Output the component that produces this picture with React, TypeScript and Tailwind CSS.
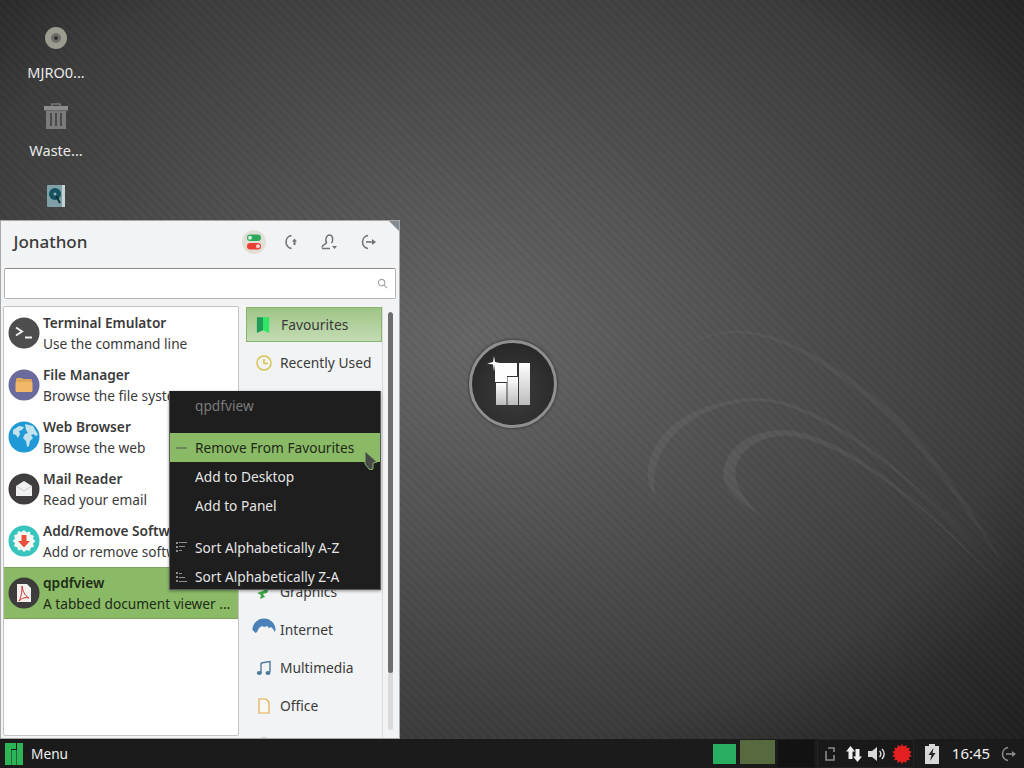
import React from "react";

const Terminal = () => (
  <svg viewBox="0 0 32 32" className="w-8 h-8"><circle cx="16" cy="16" r="15.5" fill="#4d4d4d" /><path d="M8 10.500l6 4-6 4" fill="none" stroke="#f0f0f0" strokeWidth="2" /><path d="M17 20.500h7" stroke="#f0f0f0" strokeWidth="2" /></svg>
);
const Files = () => (
  <svg viewBox="0 0 32 32" className="w-8 h-8"><circle cx="16" cy="16" r="15.5" fill="#6b6a9c" /><path d="M8 10l1-1h5l1 1h8l1 1v3H8z" fill="#e0a95a" /><path d="M7.500 13h17v9l-1 1h-15l-1-1z" fill="#f2b867" /></svg>
);
const Globe = () => (
  <svg viewBox="0 0 32 32" className="w-8 h-8"><circle cx="16" cy="16" r="15.500" fill="#1f9ad6" /><path d="M5 9l6-4 5 1-2 3-3 1 1 3-2 4-2-3-3-1zM17 3l8 2 5 9-3 1-1-2-3 1 2 3-3 3-1 5-2 1-1-6-3-3 2-4 3-1-2-3z" fill="#d7eaf2" opacity="0.9" /></svg>
);
const Mail = () => (
  <svg viewBox="0 0 32 32" className="w-8 h-8"><circle cx="16" cy="16" r="15.5" fill="#3f3d3d" /><path d="M8 13l8-5 8 5v10H8z" fill="#f1f1f1" /><path d="M8 13l8 5 8-5" fill="none" stroke="#c9c9c9" strokeWidth="1" /></svg>
);
const Software = () => (
  <svg viewBox="0 0 32 32" className="w-8 h-8"><circle cx="16" cy="16" r="15.5" fill="#37c5bd" /><path d="M16 5l2.500 2.500 3.300-1 .9 3.300 3.300.9-1 3.300L27.500 16 25 18.500l1 3.300-3.300.9-.9 3.300-3.300-1L16 27l-2.500-2.500-3.300 1-.9-3.300-3.300-.9 1-3.300L4.500 16 7 13.500l-1-3.300 3.300-.9.9-3.300 3.300 1z" fill="#f4f8f4" /><path d="M13.500 10h5v6h3.500L16 22.500 10 16h3.500z" fill="#e8503a" /></svg>
);
const Pdf = () => (
  <svg viewBox="0 0 32 32" className="w-8 h-8"><circle cx="16" cy="16" r="15.500" fill="#3d3b3b" /><path d="M9 7h10l4 4v14H9z" fill="#f3f0ee" /><path d="M14 9c1 5 2 9 7 12-4-1-7 0-10 3 2-4 3-8 3-15z" fill="none" stroke="#c9302c" strokeWidth="1" /></svg>
);

const apps = [
  { name: "Terminal Emulator", desc: "Use the command line", icon: <Terminal /> },
  { name: "File Manager", desc: "Browse the file system", icon: <Files /> },
  { name: "Web Browser", desc: "Browse the web", icon: <Globe /> },
  { name: "Mail Reader", desc: "Read your email", icon: <Mail /> },
  { name: "Add/Remove Software", desc: "Add or remove software", icon: <Software /> },
  { name: "qpdfview", desc: "A tabbed document viewer ...", icon: <Pdf />, active: true },
];

const Bookmark = () => (<svg viewBox="0 0 16 18" className="w-[14px] h-[18px]"><path d="M1 0h7v15l-7 3z" fill="#1f9c58" /><path d="M8 0h7v18l-7-3z" fill="#2ee664" /></svg>);
const Clock = () => (<svg viewBox="0 0 16 16" className="w-4 h-4" fill="none" stroke="#d7c24f" strokeWidth="1.500"><circle cx="8" cy="8" r="7" /><path d="M8 4v4.500h4" /></svg>);
const Dots = () => (<svg viewBox="0 0 16 16" className="w-4 h-4"><circle cx="8" cy="8" r="7.500" fill="#dcdcd0" /></svg>);
const Leaf = () => (<svg viewBox="0 0 16 16" className="w-4 h-4"><path d="M1 9l6-2 7-5-3 7-4 1 2 3-5 2 1-4z" fill="#3ca845" /></svg>);
const Cloud = () => (<svg viewBox="0 0 24 24" className="w-6 h-6"><circle cx="12" cy="12" r="11.500" fill="#f4f4f4" /><path d="M.500 12A11.500 11.500 0 0 1 23.500 12l-.7 2-1.800-3-2-2-2 1-2-2-3 1-2-1-3 2-2 4-1.500 1z" fill="#4a81b8" /></svg>);
const Music = () => (<svg viewBox="0 0 16 16" className="w-4 h-4"><path d="M5 3l9-1.500V12" fill="none" stroke="#4c7a97" strokeWidth="1.400" /><path d="M5 3v10" stroke="#4c7a97" strokeWidth="1.400" /><ellipse cx="3.300" cy="13" rx="2.500" ry="2" fill="#4c7a97" /><ellipse cx="12" cy="13" rx="2.500" ry="2" fill="#4c7a97" /></svg>);
const Doc = () => (<svg viewBox="0 0 16 16" className="w-4 h-4"><path d="M3 1h7l3 3v11H3z" fill="#f7f7f4" stroke="#e3aa4b" strokeWidth="1.200" /></svg>);

const cats = [
  { label: "Favourites", icon: <Bookmark />, cls: "h-[35px] mb-[2px] pt-[1px] bg-[linear-gradient(#9ec585,#c4dbb4)] border border-[#8ab46a]", iconCls: "pr-[2px]" },
  { label: "Recently Used", icon: <Clock />, cls: "h-[38px]" },
  { label: "All", icon: <Dots />, cls: "h-[38px]" },
  { label: "Accessories", icon: <Dots />, cls: "h-[38px]" },
  { label: "Development", icon: <Dots />, cls: "h-[38px]" },
  { label: "Education", icon: <Dots />, cls: "h-[38px]" },
  { label: "Games", icon: <Dots />, cls: "h-[39px]" },
  { label: "Graphics", icon: <Leaf />, cls: "h-[38px]" },
  { label: "Internet", icon: <Cloud />, cls: "h-[38px]" },
  { label: "Multimedia", icon: <Music />, cls: "h-[38px]" },
  { label: "Office", icon: <Doc />, cls: "h-[38px]" },
  { label: "Settings", icon: <Dots />, cls: "h-[38px]" },
];

const Toggle = () => (
  <svg viewBox="0 0 24 24" className="w-6 h-6"><circle cx="12" cy="12" r="12" fill="#e2e0d6" /><rect x="5" y="4.500" width="14" height="6.500" rx="3.200" fill="#2fa85a" /><circle cx="8" cy="7.700" r="2" fill="#cfeedd" /><rect x="5" y="13" width="14" height="6.500" rx="3.200" fill="#ea4034" /><circle cx="16" cy="16.200" r="2" fill="#f6d4d0" /></svg>
);
const Suspend = () => (
  <svg viewBox="0 0 16 16" className="w-4 h-4"><path d="M8.500 1.500A6.600 6.600 0 0 0 8.500 14.500" fill="none" stroke="#737373" strokeWidth="1.600" /><path d="M11.500 4.500l2.500 3h-1.500v3.500H10.500V7.500H9z" fill="#737373" /></svg>
);
const UserIcon = () => (
  <svg viewBox="0 0 16 16" className="w-4 h-4" fill="none" stroke="#737373" strokeWidth="1.500"><path d="M1 13.500c0-3 4-3 4.500-5C4 6.500 5 1 8.500 1S12.500 6.500 10.500 9" /><path d="M1 14.500h8" /><path d="M11 12h5l-2.500 3z" fill="#737373" stroke="none" /></svg>
);
const Logout = ({ c = "#737373" }: { c?: string }) => (
  <svg viewBox="0 0 16 16" className="w-4 h-4"><path d="M8 1.500A6.600 6.600 0 0 0 8 14.500" fill="none" stroke={c} strokeWidth="1.600" /><path d="M6 8h7" stroke={c} strokeWidth="1.600" /><path d="M12 5l4 3-4 3z" fill={c} /></svg>
);

const SortIcon = ({ flip }: { flip?: boolean }) => (
  <svg viewBox="0 0 11 11" className={flip ? "w-[11px] h-[11px] -scale-y-100" : "w-[11px] h-[11px]"} fill="#8f8f8f"><rect x="0" y="0" width="2" height="2" /><rect x="3" y="0" width="8" height="1" /><rect x="0" y="4" width="2" height="2" /><rect x="3" y="4" width="6" height="1" /><rect x="0" y="8" width="2" height="2" /><rect x="3" y="8" width="3" height="1" /></svg>
);

const burst = Array.from({ length: 28 }, (_, i) => {
  const r = i % 2 ? 7.6 : 10;
  const a = (i * Math.PI) / 14;
  return `${(10 + r * Math.sin(a)).toFixed(2)},${(10 - r * Math.cos(a)).toFixed(2)}`;
}).join(" ");

const Wallpaper = () => (
  <svg viewBox="0 0 1024 768" className="absolute inset-0 w-full h-full" fill="none">
    <g fill="#ffffff">
      <path opacity="0.06" d="M771 537C745 520 728 505 732 487C738 460 765 447 795 447C850 450 930 510 1024 612C940 525 860 460 800 453C770 451 745 470 744 490C744 505 755 522 771 537Z" />
      <path opacity="0.05" d="M662 516C652 505 650 490 658 470C672 435 720 413 770 414C830 416 920 480 1024 600C930 495 830 420 770 417C725 416 680 440 665 475C659 490 658 505 662 516Z" />
      <path opacity="0.04" d="M685 363C710 348 730 344 750 344C800 346 860 385 910 430C960 480 1000 545 1024 590C990 540 950 480 905 435C855 390 800 350 750 346C730 345 710 350 685 363Z" />
    </g>
    <g stroke="#ffffff" strokeOpacity="0.05">
      <path d="M0 165L60 222" />
      <path d="M0 180L45 222" />
      <path d="M0 200L25 222" />
    </g>
  </svg>
);

const ManjaroBig = () => (
  <div className="absolute left-[469px] top-[340px] w-[88px] h-[88px] rounded-full border-[3px] border-[#8f8f8f] bg-[radial-gradient(circle_at_50%_60%,#3d3d3d,#222222)] shadow-[0_0_3px_#222]">
    <svg viewBox="472 343 82 82" className="w-[82px] h-[82px]">
      <defs><linearGradient id="bar" x1="0" y1="0" x2="0" y2="1"><stop offset="0" stopColor="#ffffff" /><stop offset="1" stopColor="#bcbcbc" /></linearGradient></defs>
      <path d="M495 363H517V376H507V382H495Z" fill="#fdfdfd" />
      <rect x="496" y="383" width="10.500" height="22" fill="url(#bar)" />
      <rect x="507.500" y="377" width="10.500" height="28" fill="url(#bar)" />
      <rect x="519" y="363" width="11" height="42" fill="url(#bar)" />
      <path d="M494 356l1 6 7 1.500-7 1-1 7-1-7-6-1 6-1.500z" fill="#ffffff" />
    </svg>
  </div>
);

function DesktopIcon({ label, icon, cls }: { label?: string; icon: React.ReactNode; cls: string }) {
  return (
    <div className={"w-[112px] flex flex-col items-center " + cls}>
      <div className="h-8 flex items-center justify-center">{icon}</div>
      {label && <div className="mt-[8px] text-[14.500px] leading-5 text-[#e8e8e8]">{label}</div>}
    </div>
  );
}

function MenuItem({ label, icon, active }: { label: string; icon?: React.ReactNode; active?: boolean }) {
  return (
    <div className={"h-[29px] flex items-center " + (active ? "bg-[#8aba66] text-[#1f2a17]" : "text-[#e4e4e4]")}>
      <div className="w-[25px] pl-[6px] flex items-center">{icon}</div>
      <span className="pt-[2px]">{label}</span>
    </div>
  );
}

export default function App() {
  return (
    <div className="w-[1024px] h-[768px] flex flex-col overflow-hidden font-['Noto_Sans','Open_Sans',sans-serif] bg-[#222]">
      <div className="relative flex-1 bg-[radial-gradient(ellipse_720px_520px_at_470px_340px,#666666_0%,#565656_30%,#3c3c3c_77%,#2a2a2a_93%,#202020_108%)]">
        <div className="absolute inset-0 bg-[repeating-linear-gradient(45deg,rgba(0,0,0,0.035)_0px,rgba(0,0,0,0.035)_3px,rgba(255,255,255,0.012)_3px,rgba(255,255,255,0.012)_6.400px)]" />
        <Wallpaper />
        <ManjaroBig />

        <div className="relative flex flex-col pt-[22px]">
          <DesktopIcon cls="h-[78px]" label="MJRO0..." icon={
            <svg viewBox="0 0 24 24" className="w-[24px] h-[24px]"><circle cx="12" cy="12" r="11" fill="#9c9b8f" /><circle cx="12" cy="12" r="5" fill="#6f6e68" /><circle cx="12" cy="12" r="2" fill="#333" /></svg>
          } />
          <DesktopIcon cls="h-[80px]" label="Waste..." icon={
            <svg viewBox="0 0 24 26" className="w-6 h-[26px]"><path d="M8 3V1h8v2" fill="none" stroke="#7b7b7b" strokeWidth="1.500" /><rect x="0" y="3" width="24" height="4.500" fill="#8c8c8c" /><path d="M2 8h20v18H2z" fill="#7b7b7b" /><path d="M7 10v13M12 10v13M17 10v13" stroke="#4a4a4a" strokeWidth="2" /></svg>
          } />
          <DesktopIcon cls="h-8" icon={
            <svg viewBox="0 0 18 22" className="w-[18px] h-[22px]"><rect width="18" height="22" rx="1" fill="#7fa0a6" /><rect x="15" width="3" height="22" fill="#c4d2d2" /><circle cx="8" cy="9" r="6" fill="#14525f" /><circle cx="8" cy="9" r="1.500" fill="#8fb0b5" /><path d="M9 11l4 7" stroke="#14313a" strokeWidth="2" /></svg>
          } />
        </div>

        <div className="absolute left-0 top-[220px] w-[400px] h-[519px] bg-[#f2f3f5] border border-[#a8a8a8] flex flex-col text-[#3a3a3a] overflow-hidden">
          <div className="absolute right-0 top-0 border-t-[10px] border-l-[10px] border-t-[#808a90] border-l-transparent" />
          <div className="h-[46px] flex items-center pl-[12.500px] pr-[23px] pb-[4px] shrink-0">
            <span className="flex-1 text-[17px] font-medium">Jonathon</span>
            <div className="flex items-center">
              <Toggle />
              <div className="ml-[17px]"><Suspend /></div>
              <div className="ml-[22px]"><UserIcon /></div>
              <div className="ml-[23px]"><Logout /></div>
            </div>
          </div>
          <div className="mx-[3px] h-[31px] mt-[1px] bg-white border border-[#b5b5b5] border-t-[#8c8c8c] rounded-[2px] flex items-center justify-end pr-[7px] shrink-0">
            <svg viewBox="0 0 12 12" className="w-[11px] h-[11px]" fill="none" stroke="#a8a8a8" strokeWidth="1.300"><circle cx="5" cy="5" r="3.500" /><path d="M7.500 7.500L11 11" /></svg>
          </div>
          <div className="flex flex-1 min-h-0 mt-[7px]">
            <div className="ml-[2px] w-[236px] h-[430px] bg-white border border-[#c4c4c4] rounded-[2px] shrink-0 overflow-hidden">
              {apps.map((a) => (
                <div key={a.name} className={"h-[52px] flex items-center pl-[4px] " + (a.active ? "bg-[#8aba66] border-y border-[#7ea35f] text-[#1f2a17]" : "")}>
                  <div className="w-8 h-8 shrink-0">{a.icon}</div>
                  <div className="ml-[3px] min-w-0 text-[13.700px] leading-[21px] whitespace-nowrap">
                    <div className="font-semibold">{a.name}</div>
                    <div>{a.desc}</div>
                  </div>
                </div>
              ))}
            </div>
            <div className="ml-[7px] w-[137px] h-[432px] pt-[1px] overflow-hidden shrink-0 border-r border-[#dcdcdc]">
              {cats.map((c) => (
                <div key={c.label} className={"flex items-center text-[13.800px] whitespace-nowrap " + c.cls}>
                  <div className={"w-[34px] flex justify-center " + (c.iconCls ?? "pl-[1px]")}>{c.icon}</div>
                  <span>{c.label}</span>
                </div>
              ))}
            </div>
            <div className="ml-[5px] w-[5px] h-[418px] mt-[6px] rounded-full bg-[#dadada] overflow-hidden shrink-0">
              <div className="h-[361px] bg-[#6e6e6e] rounded-full" />
            </div>
          </div>
        </div>

        <div className="absolute left-[169px] top-[391px] w-[212px] h-[199px] overflow-hidden bg-[#1e1e1e] border-l border-b border-r border-[#5a5a5a] text-[13.700px] shadow-[0_1px_3px_rgba(0,0,0,0.4)]">
          <div className="h-[42px] pt-[5px] pl-[25px] leading-5 text-[#7a7a7a]">qpdfview</div>
          <MenuItem active label="Remove From Favourites" icon={<span className="block w-[11px] h-[2px] bg-[#6e8a58]" />} />
          <MenuItem label="Add to Desktop" />
          <MenuItem label="Add to Panel" />
          <div className="h-[13px]" />
          <MenuItem label="Sort Alphabetically A-Z" icon={<SortIcon />} />
          <MenuItem label="Sort Alphabetically Z-A" icon={<SortIcon flip />} />
        </div>

        <svg viewBox="0 0 14 20" className="absolute left-[364px] top-[450px] w-[14px] h-[20px]"><path d="M1 1l12 11-4 1v6l-3 1-5-6z" fill="#4a4a4a" stroke="#8aba66" strokeWidth="1" /></svg>
      </div>

      <div className="h-[29px] shrink-0 bg-[#1b1b1b] flex items-stretch text-[#efefef] text-[13.700px]">
        <div className="flex items-center pl-[5px] w-[90px]">
          <svg viewBox="0 0 18 22" className="w-[18px] h-[22px]"><path d="M0 0h11v6H6v16H0z" fill="#2db457" /><rect x="6.500" y="7" width="5" height="15" fill="#2db457" /><rect x="12" y="0" width="6" height="22" fill="#2db457" /></svg>
          <span className="ml-2 pt-[2px]">Menu</span>
        </div>
        <div className="flex-1" />
        <div className="flex items-center">
          <div className="w-[23px] h-[20px] bg-[#27ae60]" />
          <div className="ml-[4px] w-[35px] h-[24px] mb-[4px] bg-[#56693f]" />
          <div className="ml-[3px] w-[36px] h-[27px] bg-[#121212]" />
        </div>
        <div className="ml-[3px] w-[97px] flex items-center pl-[5px] border border-[#242424] bg-[#191919]">
          <svg viewBox="0 0 14 14" className="w-[14px] h-[14px]" fill="none" stroke="#8a8a8a" strokeWidth="1.600"><path d="M5 1h6v4M3 4v9h8v-5" /></svg>
          <svg viewBox="0 0 18 18" className="ml-[8px] w-[18px] h-[18px]" fill="#f0f0f0"><path d="M5.500 1L10 6.500H7.500V14h-4V6.500H1zM12.500 17L8 11.500h2.500V4h4v7.500H17z" /></svg>
          <svg viewBox="0 0 20 16" className="ml-[4px] w-[20px] h-[16px]"><path d="M1 5h4l5-4v14l-5-4H1z" fill="#d8d8d8" /><path d="M12.500 5a4 4 0 0 1 0 6M15 3a7 7 0 0 1 0 10" fill="none" stroke="#d8d8d8" strokeWidth="1.500" /></svg>
          <svg viewBox="0 0 20 20" className="ml-[5px] w-5 h-5"><polygon points={burst} fill="#e3201f" /></svg>
        </div>
        <div className="w-[36px] flex items-center justify-center">
          <svg viewBox="0 0 14 20" className="w-[14px] h-[20px]"><path d="M4 0h6v2h4v18H0V2h4z" fill="#d8d8d8" /><path d="M8.500 4L3.500 11h3L5 17l5.500-8h-3z" fill="#222" /></svg>
        </div>
        <div className="w-[42px] flex items-center justify-center text-[15px]">16:45</div>
        <div className="w-[32px] flex items-center justify-center"><Logout c="#8a8a8a" /></div>
      </div>
    </div>
  );
}
